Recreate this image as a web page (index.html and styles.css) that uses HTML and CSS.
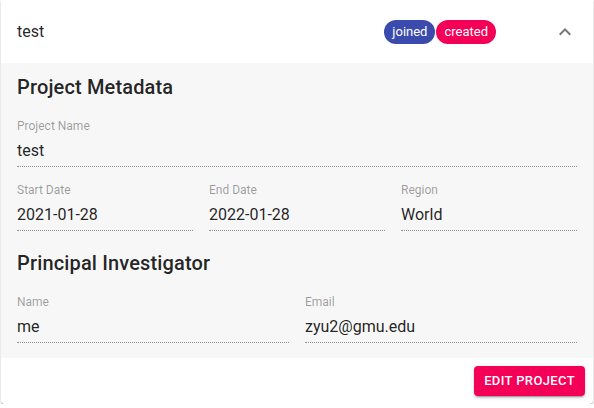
FILE: index.html
```html
<!DOCTYPE html>
<html>
<head>
<meta charset="utf-8">
<link rel="stylesheet" href="styles.css">
</head>
<body>
<div class="card">
  <div class="summary">
    <div class="title">test</div>
    <div class="chips">
      <span class="chip chip-joined">joined</span>
      <span class="chip chip-created">created</span>
    </div>
    <svg class="expand" viewBox="0 0 24 24" width="24" height="24"><path d="M12 8l-6 6 1.41 1.41L12 10.83l4.59 4.58L18 14z"/></svg>
  </div>
  <div class="details">
    <h2 class="heading">Project Metadata</h2>
    <div class="row row-1">
      <div class="field"><div class="label">Project Name</div><div class="value">test</div></div>
    </div>
    <div class="row row-3">
      <div class="field"><div class="label">Start Date</div><div class="value">2021-01-28</div></div>
      <div class="field"><div class="label">End Date</div><div class="value">2022-01-28</div></div>
      <div class="field"><div class="label">Region</div><div class="value">World</div></div>
    </div>
    <h2 class="heading heading-2">Principal Investigator</h2>
    <div class="row row-2">
      <div class="field"><div class="label">Name</div><div class="value">me</div></div>
      <div class="field"><div class="label">Email</div><div class="value">zyu2@gmu.edu</div></div>
    </div>
  </div>
  <div class="actions">
    <button class="btn">Edit Project</button>
  </div>
</div>
</body>
</html>
```

FILE: styles.css
```css
html, body {
  margin: 0;
  padding: 0;
  background: #ffffff;
}
body {
  font-family: Roboto, "Liberation Sans", sans-serif;
  color: rgba(0, 0, 0, 0.87);
}
.card {
  margin: 0 1px;
  background: #ffffff;
  border-radius: 0 0 4px 4px;
  box-shadow: 0 1px 3px 0 rgba(0,0,0,0.2), 0 1px 1px 0 rgba(0,0,0,0.14), 0 2px 1px -1px rgba(0,0,0,0.12);
}
.summary {
  height: 63px;
  display: flex;
  align-items: center;
  padding: 0 16px;
}
.title {
  flex: 1;
  font-size: 16px;
  line-height: 24px;
}
.chips {
  display: flex;
  gap: 1px;
}
.chip {
  height: 24px;
  line-height: 24px;
  padding: 0 8px;
  border-radius: 12px;
  color: #ffffff;
  font-size: 13px;
}
.chip-joined { background: #3b4bad; }
.chip-created { background: #f50057; }
.expand {
  margin-left: 57px;
  fill: rgba(0, 0, 0, 0.54);
}
.details {
  background: #f7f7f7;
  padding: 8px 16px 15px;
}
.heading {
  margin: 0 0 15px;
  font-size: 20px;
  line-height: 32px;
  font-weight: 500;
  letter-spacing: 0.0075em;
}
.heading-2 {
  margin-top: 16px;
}
.row {
  display: grid;
  column-gap: 16px;
}
.row + .row {
  margin-top: 15px;
}
.row-1 { grid-template-columns: 1fr; }
.row-3 { grid-template-columns: 1fr 1fr 1fr; }
.row-2 { grid-template-columns: 1fr 1fr; }
.field {
  border-bottom: 1px dotted rgba(0, 0, 0, 0.42);
  padding-bottom: 6px;
}
.label {
  font-size: 12px;
  line-height: 16px;
  color: rgba(0, 0, 0, 0.38);
}
.value {
  margin-top: 7px;
  font-size: 16px;
  line-height: 19px;
  color: rgba(0, 0, 0, 0.87);
}
.actions {
  display: flex;
  justify-content: flex-end;
  padding: 8px;
}
.btn {
  font-family: Roboto, "Liberation Sans", sans-serif;
  font-size: 13px;
  font-weight: 500;
  line-height: 22px;
  letter-spacing: 0.02857em;
  text-transform: uppercase;
  color: #ffffff;
  background: #f50057;
  border: 0;
  border-radius: 4px;
  padding: 4px 10px;
  box-shadow: 0 3px 1px -2px rgba(0,0,0,0.2), 0 2px 2px 0 rgba(0,0,0,0.14), 0 1px 5px 0 rgba(0,0,0,0.12);
}
```
